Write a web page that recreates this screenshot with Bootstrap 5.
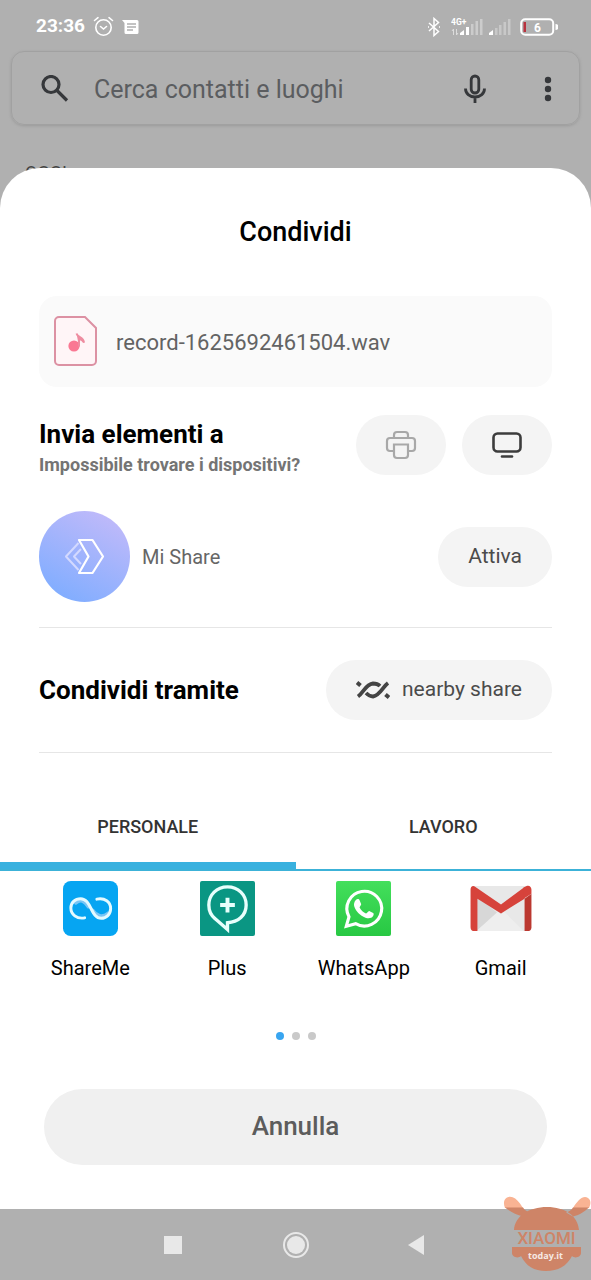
<!DOCTYPE html>
<html lang="it">
<head>
<meta charset="utf-8">
<meta name="viewport" content="width=device-width, initial-scale=1">
<title>Condividi</title>
<link href="https://cdn.jsdelivr.net/npm/bootstrap@5.3.0/dist/css/bootstrap.min.css" rel="stylesheet">
<style>
  body { background: #b0b0b0; font-family: Roboto, "Liberation Sans", sans-serif; color: #000; line-height: 1.2; }
  svg { display: block; flex: none; }
  .status { height: 51px; padding: 2px 33px 0 36px; color: #fff; font-size: 19px; font-weight: 700; }
  .search { margin: 0 11px; height: 74px; padding: 2px 20px 0 28px; border: 1px solid #a1a1a1; border-radius: 13px; box-shadow: 0 1px 3px #9a9a9a; color: #36383b; }
  .search input { color: #5b5d60; font-size: 25px; font-family: Roboto, sans-serif; min-width: 0; }
  .search input::placeholder { color: #5b5d60; opacity: 1; }
  .plain { border: 0; background: none; padding: 0; color: inherit; }
  .search input.plain { padding: 2px 0 0; }
  .day { height: 64px; margin: 0; padding: 36px 25px 0; font-size: 18px; color: #444; line-height: 24px; }
  .sheet { position: relative; margin-top: -21px; border-radius: 40px 40px 0 0; }
  .inset { padding: 0 39px; }
  .title { font-size: 27px; font-weight: 500; line-height: 32px; padding: 48px 0; }
  .file { height: 91px; border-radius: 18px; background: #fafafa; padding: 0 15px; gap: 18px; font-size: 22px; color: #636363; }
  .devices { margin-top: 28px; }
  .head { font-size: 26px; font-weight: 700; line-height: 30px; margin: 0; }
  .hint { font-size: 18px; font-weight: 700; line-height: 24px; color: #747474; margin: 4px 0 0; }
  .pill { height: 60px; border-radius: 30px; border: 0; background: #f4f4f4; color: #4b4b4b; font-size: 21px; padding: 0 30px; }
  .pill.tool { width: 90px; padding: 0; }
  .mishare { margin-top: 34px; padding-bottom: 25px; border-bottom: 1px solid #e6e6e6; font-size: 20px; color: #666; }
  .via { padding: 32px 0; border-bottom: 1px solid #e6e6e6; }
  .switcher { margin-top: 34px; }
  .switcher button { height: 84px; border: 0; border-bottom: 2px solid #3cb2d8; background: none; font-size: 18px; font-weight: 500; color: #333; padding: 0 0 2px; }
  .switcher button.active { box-shadow: inset 0 -7px #39b1df; }
  .apps { padding: 10px 22px 0; }
  .apps a { color: #000; font-size: 20px; line-height: 24px; gap: 20px; }
  .dots { gap: 8px; margin-top: 52px; }
  .dots span { width: 8px; height: 8px; border-radius: 50%; background: #c9c9c9; }
  .dots .on { background: #38a5f0; }
  .cancel { margin: 49px 44px 44px; height: 76px; border: 0; border-radius: 38px; background: #f0f0f0; color: #5c5c5c; font-size: 26px; font-weight: 500; }
  .navbuttons { height: 71px; gap: 94px; color: #e8e8e8; position: relative; }
  .navbuttons .plain { width: 28px; height: 28px; }
  .watermark { position: absolute; right: 0; bottom: 6px; }
</style>
</head>
<body>
<header>
  <div class="status d-flex align-items-center">
    <span>23:36</span>
    <svg class="ms-2" width="21" height="21" viewBox="0 0 21 21" fill="none" stroke="#fff" stroke-width="1.6" stroke-linecap="round"><circle cx="10.500" cy="11.500" r="7.700"/><path d="M1.500 4.500 5 1.700M19.500 4.500 16 1.700M7.500 10.500l3 2.500 3-2.500"/></svg>
    <svg class="ms-2" width="17" height="16" viewBox="0 0 17 16"><path fill="#fff" d="M0 1h15a1.500 1.500 0 0 1 1.500 1.500v11a1.500 1.500 0 0 1-1.500 1.500H4a1.500 1.500 0 0 1-1.500-1.500V4z"/><path stroke="#b0b0b0" stroke-width="1.400" d="M5 5h9M5 8h9M5 11h6"/></svg>
    <svg class="ms-auto" width="14" height="20" viewBox="0 0 14 20" fill="none" stroke="#fff" stroke-width="1.500"><path d="m2 6 9.500 8.500L7 18.500v-17l4.500 4L2 14"/><path d="M1 10h1M12 10h1"/></svg>
    <svg style="margin-left:10px" width="33" height="20" viewBox="0 0 33 20"><text x="0" y="8" font-size="8.500" font-weight="700" fill="#fff">4G+</text><path stroke="#dcdcdc" stroke-width="1" fill="none" d="M2.500 18v-6l-1.500 2M5.500 12v6l1.500-2"/><path fill="#fff" d="M9 18v-2l4-3v5zM15 18v-8h3v8z"/><path fill="#ccc" d="M20 18V7h2.500v11zM24.500 18V4H27v14zM29 18V2h2.500v16z"/></svg>
    <svg class="ms-1" width="24" height="20" viewBox="0 0 24 20"><path fill="#fff" d="M1 18v-2l4-3v5z"/><path fill="#c8c8c8" d="M7 18v-7h2.500v7zM11 18V8h2.500v10zM15.500 18V5H18v13zM20 18V2h2.500v16z"/></svg>
    <svg class="ms-2" width="38" height="18" viewBox="0 0 38 18"><rect x="1.200" y="1.200" width="32" height="15.600" rx="4" fill="none" stroke="#fff" stroke-width="2"/><path fill="#b8323e" d="M3.500 4H6v10H3.500z"/><path fill="#fff" d="M35.500 6a3 3 0 0 1 0 6z"/><text x="17.500" y="13.500" text-anchor="middle" font-size="12" font-weight="700" fill="#fff">6</text></svg>
  </div>
  <form class="search d-flex align-items-center">
    <svg width="30" height="30" viewBox="0 0 30 30" fill="none" stroke="currentColor" stroke-width="3.200"><circle cx="11" cy="10.500" r="8"/><path d="m16.500 16 10.500 10.500"/></svg>
    <input class="plain flex-grow-1 ms-4" type="text" placeholder="Cerca contatti e luoghi" aria-label="Cerca contatti e luoghi">
    <button class="plain" type="button" aria-label="Ricerca vocale"><svg width="24" height="30" viewBox="0 0 24 30" fill="none" stroke="currentColor" stroke-width="2.800"><rect x="8.200" y="2" width="7.600" height="17" rx="3.800"/><path d="M2.500 14.500c0 5 4 8.500 9.500 8.500s9.500-3.500 9.500-8.500M12 23v6"/></svg></button>
    <button class="plain ms-5" type="button" aria-label="Altro"><svg width="24" height="26" viewBox="0 0 24 26" fill="currentColor"><circle cx="13" cy="4" r="3.200"/><circle cx="13" cy="13" r="3.200"/><circle cx="13" cy="22" r="3.200"/></svg></button>
  </form>
  <p class="day">OGGI</p>
</header>

<main class="sheet bg-white d-flex flex-column">
  <h1 class="title text-center m-0">Condividi</h1>
  <div class="inset">
    <div class="file d-flex align-items-center">
      <svg width="44" height="52" viewBox="0 0 44 52"><path d="M5 1h26l11 11v33a4 4 0 0 1-4 4H5a4 4 0 0 1-4-4V5a4 4 0 0 1 4-4z" fill="#fff5f7" stroke="#dc91a3" stroke-width="2"/><circle cx="20" cy="30" r="5.600" fill="#fa7893"/><path d="M22.500 17.500c1 4 7 3.500 7.500 9-2-3-4-3.500-5-3v7" fill="#ee8ca0" stroke="#ee8ca0" stroke-width="2"/></svg>
      <span class="text-truncate pt-1">record-1625692461504.wav</span>
    </div>
    <section class="devices d-flex align-items-start">
      <div class="me-auto"><h2 class="head pt-1">Invia elementi a</h2><p class="hint">Impossibile trovare i dispositivi?</p></div>
      <div class="d-flex gap-3">
        <button class="pill tool d-flex align-items-center justify-content-center" aria-label="Stampa"><svg width="32" height="30" viewBox="0 0 32 30" fill="none" stroke="#a8a8a8" stroke-width="2.200"><path d="M9 8V5a3 3 0 0 1 3-3h8a3 3 0 0 1 3 3v3M9 21H5a3 3 0 0 1-3-3v-7a3 3 0 0 1 3-3h22a3 3 0 0 1 3 3v7a3 3 0 0 1-3 3h-4"/><path d="M9 14.500h14V25a3 3 0 0 1-3 3h-8a3 3 0 0 1-3-3z"/></svg></button>
        <button class="pill tool d-flex align-items-center justify-content-center" aria-label="Schermo"><svg width="30" height="28" viewBox="0 0 30 28" fill="none" stroke="#3c3c3c" stroke-width="2.600" stroke-linecap="round"><rect x="1.500" y="2.500" width="27" height="18" rx="4"/><path d="M10 25.500h10"/></svg></button>
      </div>
    </section>
    <section class="mishare d-flex align-items-center">
      <svg width="91" height="91" viewBox="0 0 91 91" fill="none" stroke-linejoin="round"><defs><linearGradient id="violet" x1=".8" y1=".1" x2=".3" y2="1"><stop stop-color="#bdb9fa"/><stop offset="1" stop-color="#80adff"/></linearGradient></defs><circle cx="45.500" cy="45.500" r="45.500" fill="url(#violet)"/><path d="M39.500 32 27 45.500 39.500 59M42 38l-7 7.500 7 7.500" stroke="#d3d9ff" stroke-width="2"/><path d="M40 29h13.500L64 45.500 53.500 62H40l9.500-16.500z" stroke="#fff" stroke-width="2.200"/></svg>
      <span class="ms-2 ps-1 me-auto">Mi Share</span>
      <button class="pill">Attiva</button>
    </section>
    <section class="via d-flex align-items-center justify-content-between">
      <h2 class="head">Condividi tramite</h2>
      <button class="pill d-flex align-items-center gap-2"><svg class="me-1" width="34" height="20" viewBox="0 0 34 20" fill="none" stroke="#444" stroke-width="3.800"><path d="M2 16.500C7 13 10 4 17 3.500c3 0 5 .5 7 2.500M10 13c2 2 4 3.500 7 3.500 7-1 10-10 15-13.500"/><path stroke-width="4" d="m1 2.500 3.500 3M29.500 14.500l3.500 3"/></svg>nearby share</button>
    </section>
  </div>
  <div class="switcher d-flex" role="tablist">
    <button class="col-6 active" role="tab" aria-selected="true">PERSONALE</button>
    <button class="col-6" role="tab" aria-selected="false">LAVORO</button>
  </div>
  <nav class="apps row g-0 row-cols-4" aria-label="Applicazioni">
    <a href="#" class="d-flex flex-column align-items-center text-decoration-none"><svg width="55" height="55" viewBox="0 0 56 56"><rect width="56" height="56" rx="8" fill="#06a5f2"/><g fill="none" stroke-width="3" stroke-linecap="round"><path d="M13 22c5-4 9-2 13 4M30 30c4 6 10 8 16 3" stroke="#79c5f5" stroke-width="4"/><path d="M22 37.500C14 39 8 34 8 27.500 8 22 12 18 18 18c11 0 10 20 21 20 5 0 9.500-4 9.500-10 0-7-6-11-14-9.500" stroke="#e4faff"/></g></svg>ShareMe</a>
    <a href="#" class="d-flex flex-column align-items-center text-decoration-none"><svg width="55" height="55" viewBox="0 0 56 56"><rect width="56" height="56" rx="2" fill="#0a9683"/><path d="M28 49.500 15.500 38.500C11 35 9 30 9 24.500 9 14 17 6 28 6s19 8 19 18.500S39 42 28 42.500z" fill="none" stroke="#e8fffc" stroke-width="3.400"/><path d="M28 17v15M20.500 24.500h15" stroke="#e8fffc" stroke-width="4"/></svg>Plus</a>
    <a href="#" class="d-flex flex-column align-items-center text-decoration-none"><svg width="55" height="55" viewBox="0 0 56 56"><defs><linearGradient id="green" x2="0" y2="1"><stop stop-color="#43df5c"/><stop offset="1" stop-color="#28c843"/></linearGradient></defs><rect width="56" height="56" rx="2" fill="url(#green)"/><path d="m10.500 46 2.700-9.500a17.700 17.700 0 1 1 6.800 7z" fill="none" stroke="#fff" stroke-width="3.200"/><path fill="#fff" d="M20 19.500c1.500-1.700 3.500-1.500 4 .2l1.600 3.800c.4 1-1.600 2.700-1.600 3.500 1.500 3 4 5 6.500 6 1 .3 2.300-2.700 3.300-2.500l4 2c.8.400.8 2-.2 3.400-1.600 2.200-4.600 2.400-7.600 1.400-5.500-2-9.500-6-11.300-11-.9-2.700-.1-5.300 1.300-6.800z"/></svg>WhatsApp</a>
    <a href="#" class="d-flex flex-column align-items-center text-decoration-none"><svg width="64" height="55" viewBox="0 0 64 56"><path fill="#e8e8e8" d="M4 5h56v46H4z"/><path fill="#d7d7d7" d="m7 15 22 18L7 51z"/><path fill="#eee" d="M7 51 29 31l3 3 3-3 20 20z"/><path fill="#d6433b" d="M1 9v38c0 2.500 1.500 4 4 4h3V18l24 15 24-15V6L32 24 6 6C3 4 1 6 1 9z"/><path fill="#bb3830" d="M56 18v33h3c2.500 0 4-1.500 4-4V13z"/><path fill="#d6433b" d="M55 6.500 58 5c3-1 5 1 5 4v4l-8 5z"/></svg>Gmail</a>
  </nav>
  <div class="dots d-flex justify-content-center"><span class="on"></span><span></span><span></span></div>
  <button class="cancel">Annulla</button>
</main>

<footer class="navbuttons d-flex align-items-center justify-content-center">
  <button class="plain" aria-label="Recenti"><svg width="28" height="28" viewBox="0 0 28 28"><path fill="currentColor" d="M4 5h18v18H4z"/></svg></button>
  <button class="plain" aria-label="Home"><svg width="28" height="28" viewBox="0 0 28 28"><circle cx="14" cy="14" r="12" fill="none" stroke="currentColor" stroke-width="2"/><circle cx="14" cy="14" r="9" fill="currentColor"/></svg></button>
  <button class="plain" aria-label="Indietro"><svg width="28" height="28" viewBox="0 0 28 28"><path fill="currentColor" d="M4 14 20 4v20z"/></svg></button>
  <svg class="watermark" width="88" height="78" viewBox="0 0 88 78"><path fill="#f9b393" d="M2 12C0 7 1 3 4 1.500c5-2 9 1 13 6L20 12zM70 12C75 4 80-1 85 2c3 2 3 6 1 10z"/><g fill="#ce8467"><path d="M2 11.500h18c2 3 4 4 7 5l-7 4C13 19 6 15 2 11.500zM86 11.500H70c-2 3-4 4-7 5l7 4C77 19 82 15 86 11.500zM11 34c1-14 15-23 33-23s31 9 32 23zM9 51h69v6c0 4-6 6-9 3-5 10-14 15-26 15S23 70 18 60c-3 3-9 1-9-3z"/><text x="43.500" y="48" text-anchor="middle" font-family="Roboto, sans-serif" font-size="17" font-weight="500">XIAOMI</text></g><text x="42.500" y="63" text-anchor="middle" font-family="'Open Sans', sans-serif" font-size="9" font-weight="700" fill="#f6e9e3">today.it</text></svg>
</footer>
<script src="https://cdn.jsdelivr.net/npm/bootstrap@5.3.0/dist/js/bootstrap.bundle.min.js"></script>
</body>
</html>
